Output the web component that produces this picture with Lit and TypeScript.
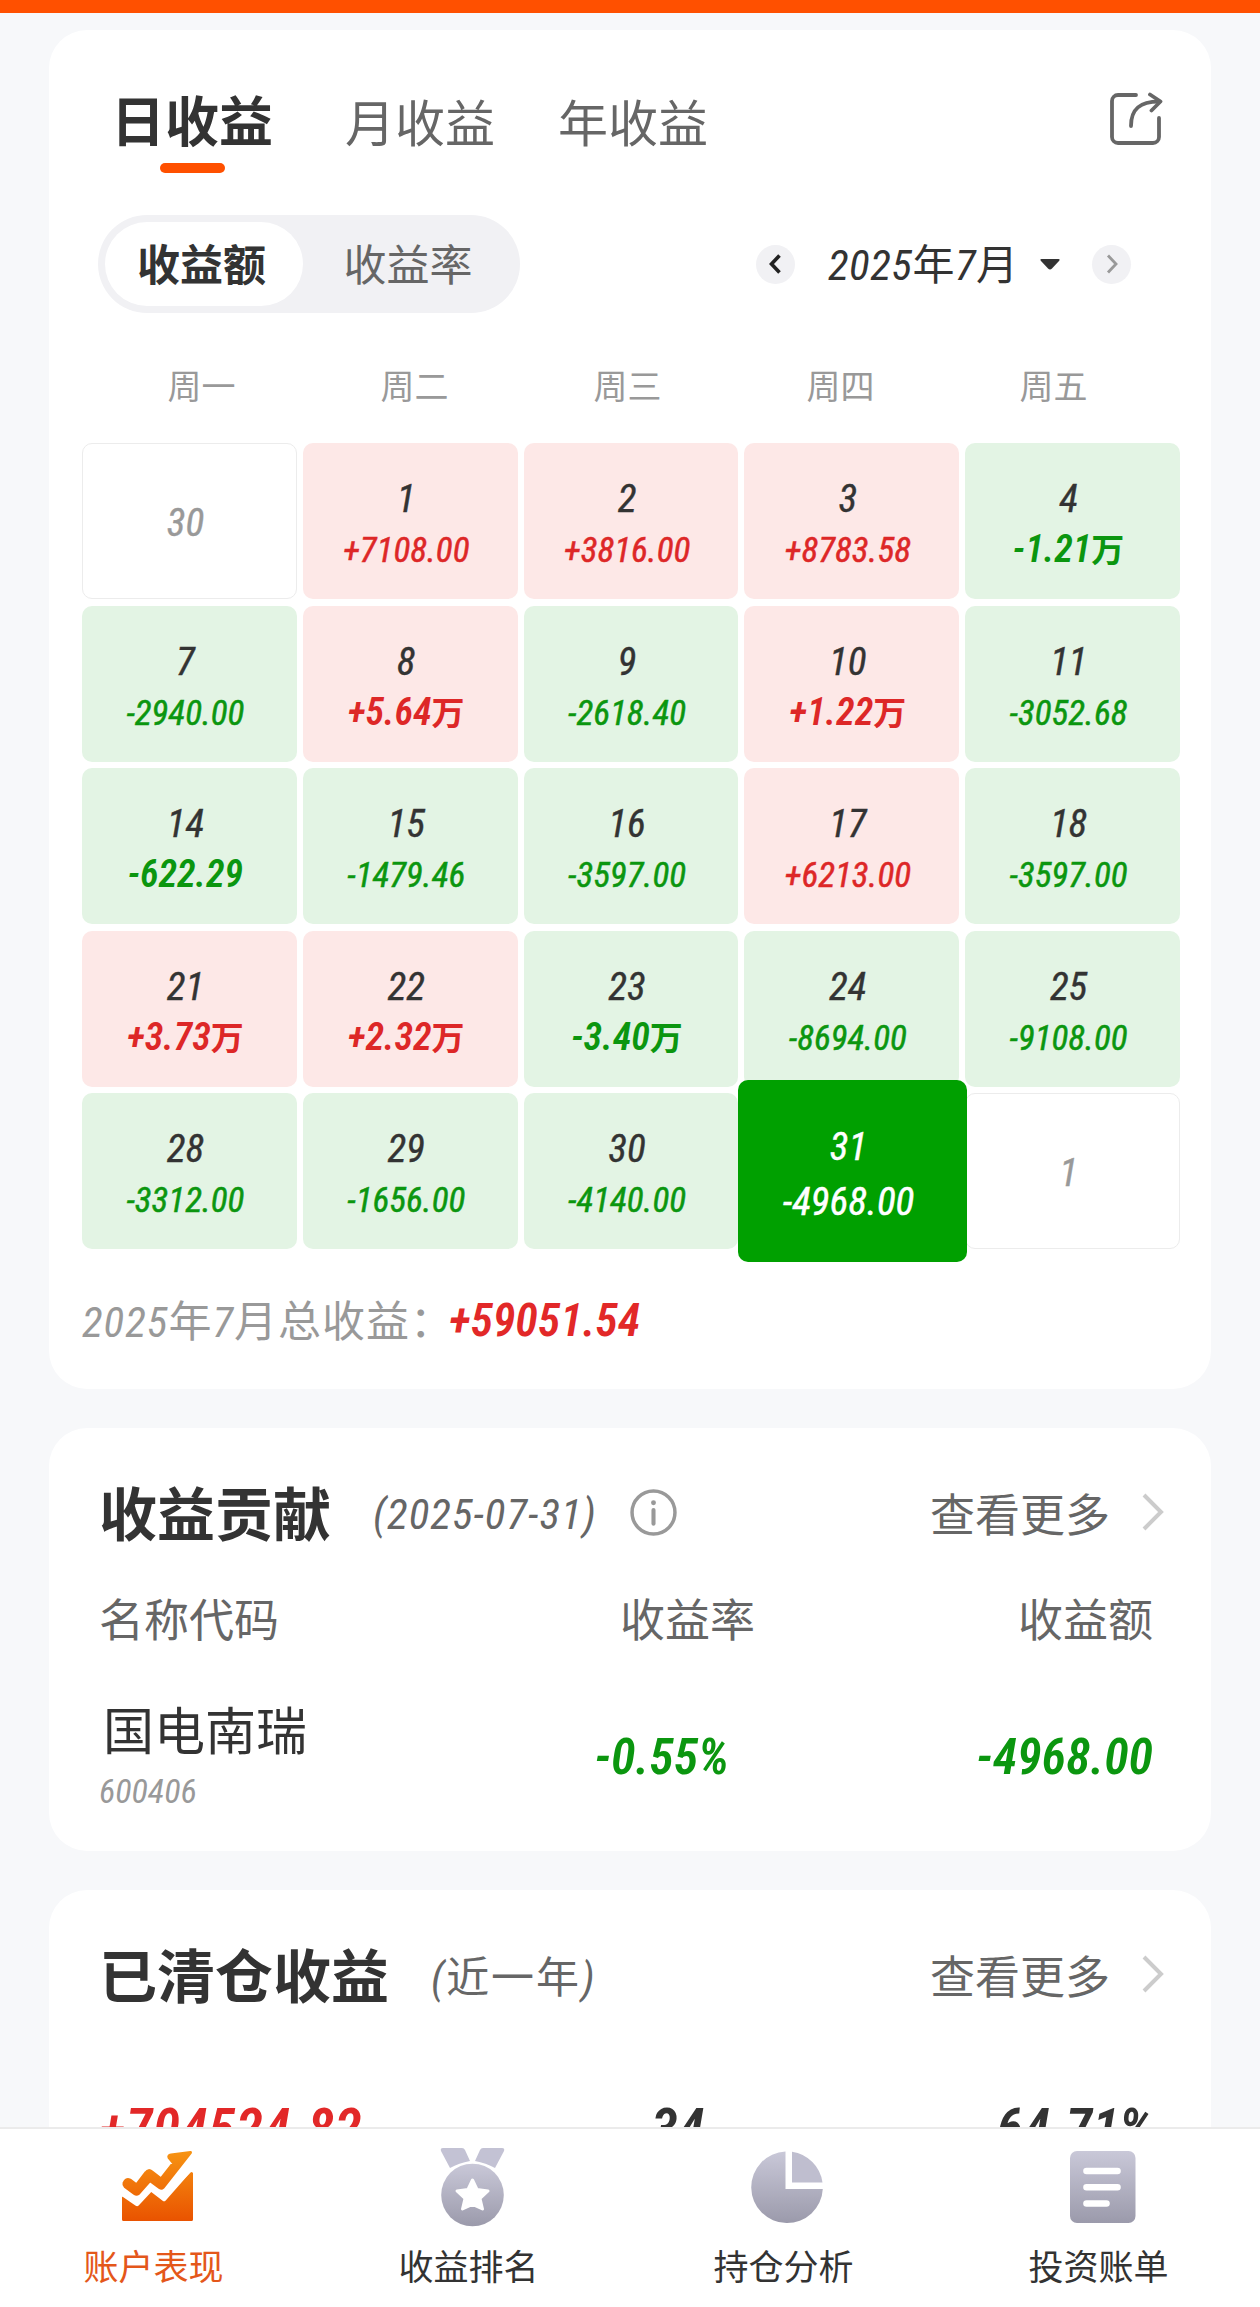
import { LitElement, html, css, svg } from "lit";
import { customElement } from "lit/decorators.js";
import { classMap } from "lit/directives/class-map.js";

type Day = { day: string; value?: string; selected?: boolean };

const WEEKDAYS = ["周一", "周二", "周三", "周四", "周五"];

const DAYS: Day[] = [
  { day: "30" },
  { day: "1", value: "+7108.00" },
  { day: "2", value: "+3816.00" },
  { day: "3", value: "+8783.58" },
  { day: "4", value: "-1.21万" },
  { day: "7", value: "-2940.00" },
  { day: "8", value: "+5.64万" },
  { day: "9", value: "-2618.40" },
  { day: "10", value: "+1.22万" },
  { day: "11", value: "-3052.68" },
  { day: "14", value: "-622.29" },
  { day: "15", value: "-1479.46" },
  { day: "16", value: "-3597.00" },
  { day: "17", value: "+6213.00" },
  { day: "18", value: "-3597.00" },
  { day: "21", value: "+3.73万" },
  { day: "22", value: "+2.32万" },
  { day: "23", value: "-3.40万" },
  { day: "24", value: "-8694.00" },
  { day: "25", value: "-9108.00" },
  { day: "28", value: "-3312.00" },
  { day: "29", value: "-1656.00" },
  { day: "30", value: "-4140.00" },
  { day: "31", value: "-4968.00", selected: true },
  { day: "1" },
];

/** Sets runs of digits in the narrow italic face and leaves Chinese upright. */
const mix = (text: string) =>
  text
    .split(/([0-9+\-.%()]+)/)
    .filter(Boolean)
    .map((part) => (/^[0-9+\-.%()]/.test(part) ? html`<span class="num">${part}</span>` : part));

const shareIcon = html`<svg class="share" viewBox="0 0 54 54" fill="none" stroke="#666" stroke-width="3.800" stroke-linecap="round" stroke-linejoin="round">
  <path d="M27 3H9a6 6 0 0 0-6 6v36a6 6 0 0 0 6 6h35a6 6 0 0 0 6-6V26" />
  <path d="M22 34C22 17 31 9.500 50 9.500" />
  <path d="M41 2.500L51.500 9.500L42.500 18.500" />
</svg>`;

const moreIcon = html`<svg class="more-arrow" viewBox="0 0 24 38" fill="none" stroke="#ccc" stroke-width="4">
  <path d="M3 2L20 19L3 36" />
</svg>`;

const infoIcon = html`<svg class="info" viewBox="0 0 46 46" fill="none" stroke="#999" stroke-width="3.400">
  <circle cx="23" cy="23" r="21" />
  <path d="M23 20.500V34" stroke-width="4" stroke-linecap="round" />
  <circle cx="23" cy="13.500" r="2.400" fill="#999" stroke="none" />
</svg>`;

const greyGradient = svg`<linearGradient id="g" x1="0" y1="0" x2="0" y2="1">
  <stop offset="0" stop-color="#c9c8d8" /><stop offset="1" stop-color="#9b9aab" />
</linearGradient>`;

const chartIcon = html`<svg class="nav-icon" viewBox="0 0 80 80">
  <defs>
    <linearGradient id="o" gradientUnits="userSpaceOnUse" x1="0" y1="4" x2="0" y2="75">
      <stop offset="0" stop-color="#f79413" /><stop offset="1" stop-color="#e95200" />
    </linearGradient>
  </defs>
  <g fill="url(#o)" stroke="url(#o)" stroke-linejoin="round">
    <path stroke-width="3" d="M5.500 50.500L19 58L32.500 44.500L46 54L73.500 26.500V72.500H5.500Z" />
    <path stroke="#fff" stroke-width="4.500" fill="none" d="M3 46L19 57L33 42L46 52L75 19" />
    <path stroke-width="3" d="M6 36Q8 31 12 33L18.500 38L28 25.500Q30.500 22 34 25L43 32L55.500 16L51 10.500Q50 8.500 53 8L72.500 5.500L45 40.500Q43.500 42 41.500 40.500L32 33.500L20.500 46.500Q18.500 48 16.500 46.500L7 39.500Q5.500 38 6 36Z" />
  </g>
</svg>`;

const medalIcon = html`<svg class="nav-icon" viewBox="0 0 80 80">
  <defs>${greyGradient}</defs>
  <path fill="#c3c2d4" d="M10 1H29Q31 1 32 3L37 14Q26 16 17 21L8 4Q7 1 10 1ZM69 1H50Q48 1 47 3L42 14Q53 16 62 21L71 4Q72 1 69 1Z" />
  <circle cx="39.500" cy="48" r="31.300" fill="url(#g)" />
  <path fill="#fff" stroke="#fff" stroke-width="3" stroke-linejoin="round" d="M39.500 33L44 42.500L55 44L47 51.500L49.500 62L39.500 57.500L29.500 62L32 51.500L24 44L35 42.500Z" />
</svg>`;

const pieIcon = html`<svg class="nav-icon" viewBox="0 0 80 80">
  <defs>${greyGradient}</defs>
  <path fill="url(#g)" d="M37.500 4.500A35.800 35.800 0 1 0 74.800 42H37.500Z" />
  <path fill="#bfbecf" d="M44 4.700A36 36 0 0 1 74.500 35.500H44Z" />
</svg>`;

const billIcon = html`<svg class="nav-icon" viewBox="0 0 80 80">
  <defs>${greyGradient}</defs>
  <rect x="7" y="4" width="65.500" height="72" rx="7" fill="url(#g)" />
  <path stroke="#fff" stroke-width="6.600" stroke-linecap="round" d="M23.500 24H54.500M23.500 40.300H54.500M23.500 56.500H43.500" />
</svg>`;

const NAV = [
  { label: "账户表现", icon: chartIcon, active: true },
  { label: "收益排名", icon: medalIcon },
  { label: "持仓分析", icon: pieIcon },
  { label: "投资账单", icon: billIcon },
];

@customElement("app-root")
export class AppRoot extends LitElement {
  static styles = css`
    :host {
      display: flex;
      flex-direction: column;
      width: 1260px;
      height: 2307px;
      overflow: hidden;
      background: #f7f8fa;
      color: #333;
      font-family: "Noto Sans CJK SC", sans-serif;
      line-height: 1;
      white-space: nowrap;
    }
    * { box-sizing: border-box; }
    svg { display: block; flex: none; }
    .num {
      font-family: "Roboto Condensed", "Roboto", sans-serif;
      font-stretch: 75%;
      font-style: italic;
    }
    .topbar { height: 13px; background: #ff5000; flex: none; }
    .scroll {
      flex: 1;
      min-height: 0;
      overflow: hidden;
      padding: 17px 49px 0;
      display: flex;
      flex-direction: column;
      gap: 39px;
    }
    .card { background: #fff; border-radius: 38px; flex: none; }
    .calendar { height: 1359px; padding: 0 31px 0 33px; }
    .contrib { height: 423px; padding: 46px 46px 0 50px; }
    .closed { height: 420px; padding: 46px 46px 0 50px; }

    .tabs { display: flex; align-items: center; height: 186px; padding: 0 17px 0 29px; }
    .tab { font-size: 50px; color: #666; width: 150px; text-align: center; margin-right: 63px; padding-bottom: 7px; }
    .tab.active {
      position: relative;
      width: 162px;
      margin-right: 72px;
      font-size: 54px;
      font-weight: 700;
      color: #333;
      padding-bottom: 8px;
    }
    .tab.active::after {
      content: "";
      position: absolute;
      left: 49px;
      bottom: -19px;
      width: 65px;
      height: 10px;
      border-radius: 5px;
      background: #ff5000;
    }
    .share { width: 54px; height: 54px; margin-left: auto; margin-top: -8px; }

    .controls { display: flex; align-items: center; height: 98px; padding: 0 49px 0 16px; margin-top: -1px; }
    .segment { display: flex; width: 422px; height: 98px; padding: 7px; border-radius: 49px; background: #f1f1f4; }
    .option { flex: 1; display: flex; align-items: center; justify-content: center; font-size: 43px; color: #666; padding-bottom: 3px; }
    .option.active { flex: 0 0 198px; border-radius: 42px; background: #fff; color: #333; font-weight: 700; padding-right: 5px; }
    .month { display: flex; align-items: center; margin-left: auto; }
    .round { width: 39px; height: 39px; border-radius: 50%; background: #f1f1f4; display: flex; align-items: center; justify-content: center; }
    .round svg { width: 14px; height: 20px; }
    .month-name { width: 190px; margin-left: 33px; font-size: 42px; text-align: left; letter-spacing: 0.5px; }
    .month-name .num { font-size: 43px; }
    .caret { width: 20px; height: 11px; margin: 0 32px 0 22px; }

    .weekdays { display: grid; grid-template-columns: repeat(5, 213px); padding-left: 13px; height: 130px; align-items: center; font-size: 34px; color: #999; text-align: center; padding-top: 14px; }
    .grid { display: grid; grid-template-columns: repeat(5, 1fr); grid-template-rows: repeat(5, 156px); gap: 6.5px 6px; width: 1098px; }
    .cell { border-radius: 10px; display: flex; flex-direction: column; align-items: center; justify-content: center; padding: 4px 8px 0 0; gap: 14px; }
    .cell.up { background: #fde8e7; color: #dd2727; }
    .cell.down { background: #e3f4e4; color: #0b960f; }
    .cell.blank { border: 1px solid #ececec; color: #999; }
    .day { font-size: 39px; line-height: 34px; color: #333; -webkit-text-stroke: 0.4px currentColor; }
    .blank .day { color: #999; }
    .value { font-size: 35px; line-height: 34px; height: 34px; -webkit-text-stroke: 0.5px currentColor; }
    .value.wide { font-size: 33px; font-weight: 700; -webkit-text-stroke: 0; padding-top: 1px; }
    .value.wide .num { font-size: 38px; font-weight: 600; }
    .cell.selected { background: #00a000; color: #fff; margin: -13px -7.500px -13px -6px; z-index: 1; padding-top: 2px; gap: 17px; }
    .selected .day { color: #fff; }
    .selected .value { font-size: 39px; }
    .total { display: flex; align-items: center; height: 60px; margin-top: 41px; font-size: 43px; color: #999; }
    .total-label { width: 367px; letter-spacing: 1px; }
    .total-value { color: #e22828; font-weight: 600; font-size: 46px; }

    .head { display: flex; align-items: center; height: 80px; margin-top: -2px; margin-bottom: 2px; }
    .title { font-size: 58px; font-weight: 700; padding-bottom: 2px; }
    .sub { font-size: 43px; color: #666; margin-left: 42px; letter-spacing: 2px; padding-top: 4px; }
    .contrib .sub { width: 226px; letter-spacing: 1px; }
    .info { width: 47px; height: 47px; margin-left: 31px; }
    .more { margin-left: auto; display: flex; align-items: center; font-size: 45px; color: #666; gap: 31px; }
    .more-arrow { width: 24px; height: 38px; }
    .cols { display: grid; grid-template-columns: 1fr 260px 398px; align-items: center; padding-right: 12px; text-align: right; }
    .cols > :first-child { text-align: left; }
    .cols.labels { height: 60px; margin-top: 35px; font-size: 45px; color: #666; }
    .cols.stock { height: 120px; margin-top: 48px; }
    .name { display: flex; flex-direction: column; gap: 20px; }
    .name-text { font-size: 51px; padding-left: 4px; }
    .code { font-size: 34px; color: #999; }
    .loss { color: #0b960f; font-weight: 600; font-size: 50px; padding-top: 4px; }
    .loss.rate { padding-right: 26px; }
    .stats { display: grid; grid-template-columns: 552px 1fr auto; padding: 0 12px 0 0; margin-top: 88px; font-size: 55px; font-weight: 600; }
    .gain { color: #e22828; letter-spacing: 0.8px; }

    .nav { flex: none; height: 180px; border-top: 2px solid #ebebeb; background: #fff; display: grid; grid-template-columns: repeat(4, 1fr); }
    .nav-item { display: flex; flex-direction: column; align-items: center; padding-top: 18px; }
    .nav-icon { width: 80px; height: 80px; }
    .nav-label { font-size: 35px; margin-top: 20px; padding-right: 8px; }
    .nav-item.active .nav-label { color: #e4571a; }
  `;

  private renderDay(d: Day) {
    const up = d.value?.startsWith("+") ?? false;
    return html`<div class=${classMap({ cell: true, blank: !d.value, up, down: !!d.value && !up, selected: !!d.selected })}>
      <span class="day num">${d.day}</span>
      ${d.value ? html`<span class=${classMap({ value: true, wide: d.value.length < 8 })}>${mix(d.value)}</span>` : ""}
    </div>`;
  }

  render() {
    return html`
      <div class="topbar"></div>
      <main class="scroll">
        <section class="card calendar">
          <div class="tabs">
            <span class="tab active">日收益</span>
            <span class="tab">月收益</span>
            <span class="tab">年收益</span>
            ${shareIcon}
          </div>
          <div class="controls">
            <div class="segment">
              <span class="option active">收益额</span>
              <span class="option">收益率</span>
            </div>
            <div class="month">
              <span class="round"><svg viewBox="0 0 14 20" fill="none" stroke="#222" stroke-width="3.600"><path d="M10.500 1.500L2.500 10L10.500 18.500" /></svg></span>
              <span class="month-name">${mix("2025年7月")}</span>
              <svg class="caret" viewBox="0 0 20 11"><path fill="#333" d="M1.500 0H18.500Q20.500 0 19 2L12 9.500Q10 11.500 8 9.500L1 2Q-.5 0 1.500 0Z" /></svg>
              <span class="round"><svg viewBox="0 0 14 20" fill="none" stroke="#999" stroke-width="2.800"><path d="M3 1.500L11 10L3 18.500" /></svg></span>
            </div>
          </div>
          <div class="weekdays">${WEEKDAYS.map((w) => html`<span>${w}</span>`)}</div>
          <div class="grid">${DAYS.map((d) => this.renderDay(d))}</div>
          <div class="total">
            <span class="total-label">${mix("2025年7月总收益：")}</span>
            <span class="total-value num">+59051.54</span>
          </div>
        </section>

        <section class="card contrib">
          <div class="head">
            <span class="title">收益贡献</span>
            <span class="sub num">(2025-07-31)</span>
            ${infoIcon}
            <span class="more">查看更多${moreIcon}</span>
          </div>
          <div class="cols labels"><span>名称代码</span><span>收益率</span><span>收益额</span></div>
          <div class="cols stock">
            <div class="name">
              <span class="name-text">国电南瑞</span>
              <span class="code num">600406</span>
            </div>
            <span class="loss rate num">-0.55%</span>
            <span class="loss num">-4968.00</span>
          </div>
        </section>

        <section class="card closed">
          <div class="head">
            <span class="title">已清仓收益</span>
            <span class="sub">${mix("(近一年)")}</span>
            <span class="more">查看更多${moreIcon}</span>
          </div>
          <div class="stats">
            <span class="gain num">+704524.82</span>
            <span class="num">34</span>
            <span class="num">64.71%</span>
          </div>
        </section>
      </main>
      <nav class="nav">
        ${NAV.map(
          (n) => html`<div class=${classMap({ "nav-item": true, active: !!n.active })}>
            ${n.icon}<span class="nav-label">${n.label}</span>
          </div>`,
        )}
      </nav>
    `;
  }
}
